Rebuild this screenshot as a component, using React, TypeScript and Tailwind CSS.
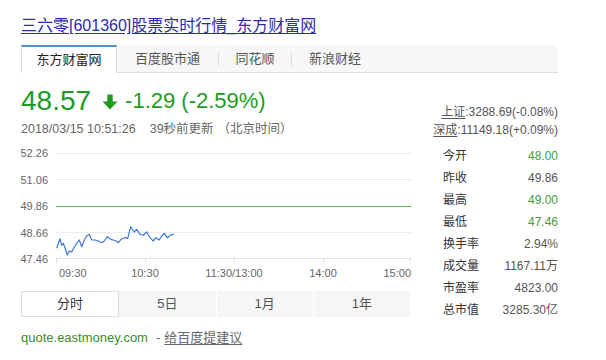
import React from "react";

const F = { fontFamily: '"Liberation Sans", "Noto Sans CJK SC", Arial, sans-serif' };

const pts: [number, number][] = [[56.7,247.3],[60,237.7],[61.7,244.3],[63.3,242.3],[65,246.7],[67.3,254],[69.3,250],[71.7,251],[74,246.7],[76.7,242.3],[79.3,239],[81.7,245.7],[84.3,239],[86.7,235],[89.3,233.3],[91.7,239],[95,239],[98.3,240],[101.7,241.7],[104.3,240],[107.3,235.7],[110.7,238.3],[113.3,239],[116,240],[118.3,241.7],[121.7,237.7],[125,236.7],[127.7,237.3],[130.7,225.7],[134,231],[136.7,228.3],[140,233.3],[143.3,234.3],[146.7,231],[150,236.7],[153.3,240],[156,236.7],[159.3,239],[161.7,235],[164.3,232.3],[167.3,236.7],[170.7,234],[174,233.3]];

const yLabels = [
  { v: "52.26", y: 152 },
  { v: "51.06", y: 178.5 },
  { v: "49.86", y: 205 },
  { v: "48.66", y: 231.5 },
  { v: "47.46", y: 257.5 },
];

function Chart() {
  return (
    <svg width="420" height="142" viewBox="0 140 420 142" className="block">
      {[152.5, 178.5, 231.5].map((y) => (
        <line key={y} x1="56" x2="411" y1={y} y2={y} stroke="#ececec" strokeWidth="1" />
      ))}
      <line x1="56" x2="411" y1="205.5" y2="205.5" stroke="#5cb85c" strokeWidth="1" />
      <line x1="56" x2="411" y1="257.5" y2="257.5" stroke="#e2e2e2" strokeWidth="1" />
      {[56.5, 145.5, 234.5, 323.5, 410.5].map((x) => (
        <line key={x} x1={x} x2={x} y1="257" y2="262" stroke="#e2e2e2" strokeWidth="1" />
      ))}
      {yLabels.map((l) => (
        <text key={l.v} x="48" y={l.y + 4} textAnchor="end" fontSize="11" fill="#666" style={F}>
          {l.v}
        </text>
      ))}
      <text x="59" y="275.5" fontSize="11" fill="#666" style={F}>09:30</text>
      <text x="145" y="275.5" fontSize="11" fill="#666" textAnchor="middle" style={F}>10:30</text>
      <text x="234" y="275.5" fontSize="11" fill="#666" textAnchor="middle" style={F}>11:30/13:00</text>
      <text x="323" y="275.5" fontSize="11" fill="#666" textAnchor="middle" style={F}>14:00</text>
      <text x="411" y="275.5" fontSize="11" fill="#666" textAnchor="end" style={F}>15:00</text>
      <polyline
        points={pts.map((p) => p.join(",")).join(" ")}
        fill="none"
        stroke="#3d78d6"
        strokeWidth="1.2"
        strokeLinejoin="round"
      />
    </svg>
  );
}

const stats: { k: string; v: string; g?: boolean }[] = [
  { k: "今开", v: "48.00", g: true },
  { k: "昨收", v: "49.86" },
  { k: "最高", v: "49.00", g: true },
  { k: "最低", v: "47.46", g: true },
  { k: "换手率", v: "2.94%" },
  { k: "成交量", v: "1167.11万" },
  { k: "市盈率", v: "4823.00" },
  { k: "总市值", v: "3285.30亿" },
];

export default function App() {
  return (
    <div className="w-[606px] h-[360px] bg-white overflow-hidden" style={F}>
      <div className="pt-[14px] pl-[21px]">
        <a className="block h-[24px] leading-[24px] text-[16px] text-[#2c2ca8] underline underline-offset-2">
          三六零[601360]股票实时行情_东方财富网
        </a>
      </div>
      <div className="mt-[7px] ml-[21px] w-[537px] h-[28px] bg-[#f7f7f7] border-b border-[#dddddd] flex items-start text-[13px]">
        <div className="w-[96px] h-[28px] bg-white border-t-2 border-t-[#4a90d9] border-x border-x-[#dddddd] flex items-center justify-center text-[#222]">
          东方财富网
        </div>
        <div className="w-[101px] h-[27px] flex items-center justify-center text-[#555]">百度股市通</div>
        <div className="w-px h-[14px] mt-[7px] bg-[#dddddd]" />
        <div className="w-[72px] h-[27px] flex items-center justify-center text-[#555]">同花顺</div>
        <div className="w-px h-[14px] mt-[7px] bg-[#dddddd]" />
        <div className="h-[27px] pl-[17px] flex items-center text-[#555]">新浪财经</div>
      </div>
      <div className="flex">
        <div className="w-[420px] shrink-0">
          <div className="mt-[12px] pl-[21px] h-[32px] flex items-center text-[#1e9b1e]">
            <span className="text-[28px] leading-[32px]">48.57</span>
            <svg width="16" height="16" viewBox="0 0 16 16" className="ml-[11px] mt-[1px]">
              <path d="M5.3 0.5h5.4v7h4.8L8 15.5 0.5 7.5h4.8z" fill="#1e9b1e" />
            </svg>
            <span className="ml-[7px] text-[22px] leading-[32px]">-1.29 (-2.59%)</span>
          </div>
          <div className="mt-[3px] pl-[21px] h-[18px] leading-[18px] text-[12.5px] text-[#666] flex">
            <span>2018/03/15 10:51:26</span>
            <span className="ml-[14px]">39秒前更新</span>
            <span className="ml-[4px]">（北京时间）</span>
          </div>
          <div className="mt-[3px]">
            <Chart />
          </div>
          <div className="mt-[8px] ml-[21px] w-[389px] h-[26px] flex text-[13px]">
            <div className="flex-1 bg-white border border-[#dddddd] flex items-center justify-center text-[#333]">分时</div>
            <div className="flex-1 bg-[#f6f6f6] flex items-center justify-center text-[#555]">5日</div>
            <div className="flex-1 bg-[#f6f6f6] border-l border-white flex items-center justify-center text-[#555]">1月</div>
            <div className="flex-1 bg-[#f6f6f6] border-l border-white flex items-center justify-center text-[#555]">1年</div>
          </div>
          <div className="mt-[11px] pl-[21px] h-[20px] leading-[20px] text-[13px] flex">
            <span className="text-[#408a28]">quote.eastmoney.com</span>
            <span className="ml-[8px] text-[#666]">-</span>
            <span className="ml-[4px] text-[#666] underline underline-offset-2">给百度提建议</span>
          </div>
        </div>
        <div className="ml-[12px] w-[126px] pt-[31px] text-[12px]">
          <div className="h-[17px] leading-[17px] text-right text-[#555]">
            <span className="underline underline-offset-2">上证</span>:3288.69(-0.08%)
          </div>
          <div className="h-[18px] leading-[18px] text-right text-[#555]">
            <span className="underline underline-offset-2">深成</span>:11149.18(+0.09%)
          </div>
          <div className="mt-[6px] pl-[11px]">
            {stats.map((s) => (
              <div key={s.k} className="h-[22px] flex items-center justify-between">
                <span className="text-[#333]">{s.k}</span>
                <span className={s.g ? "text-[#4a9a3a]" : "text-[#555]"}>{s.v}</span>
              </div>
            ))}
          </div>
        </div>
      </div>
    </div>
  );
}
